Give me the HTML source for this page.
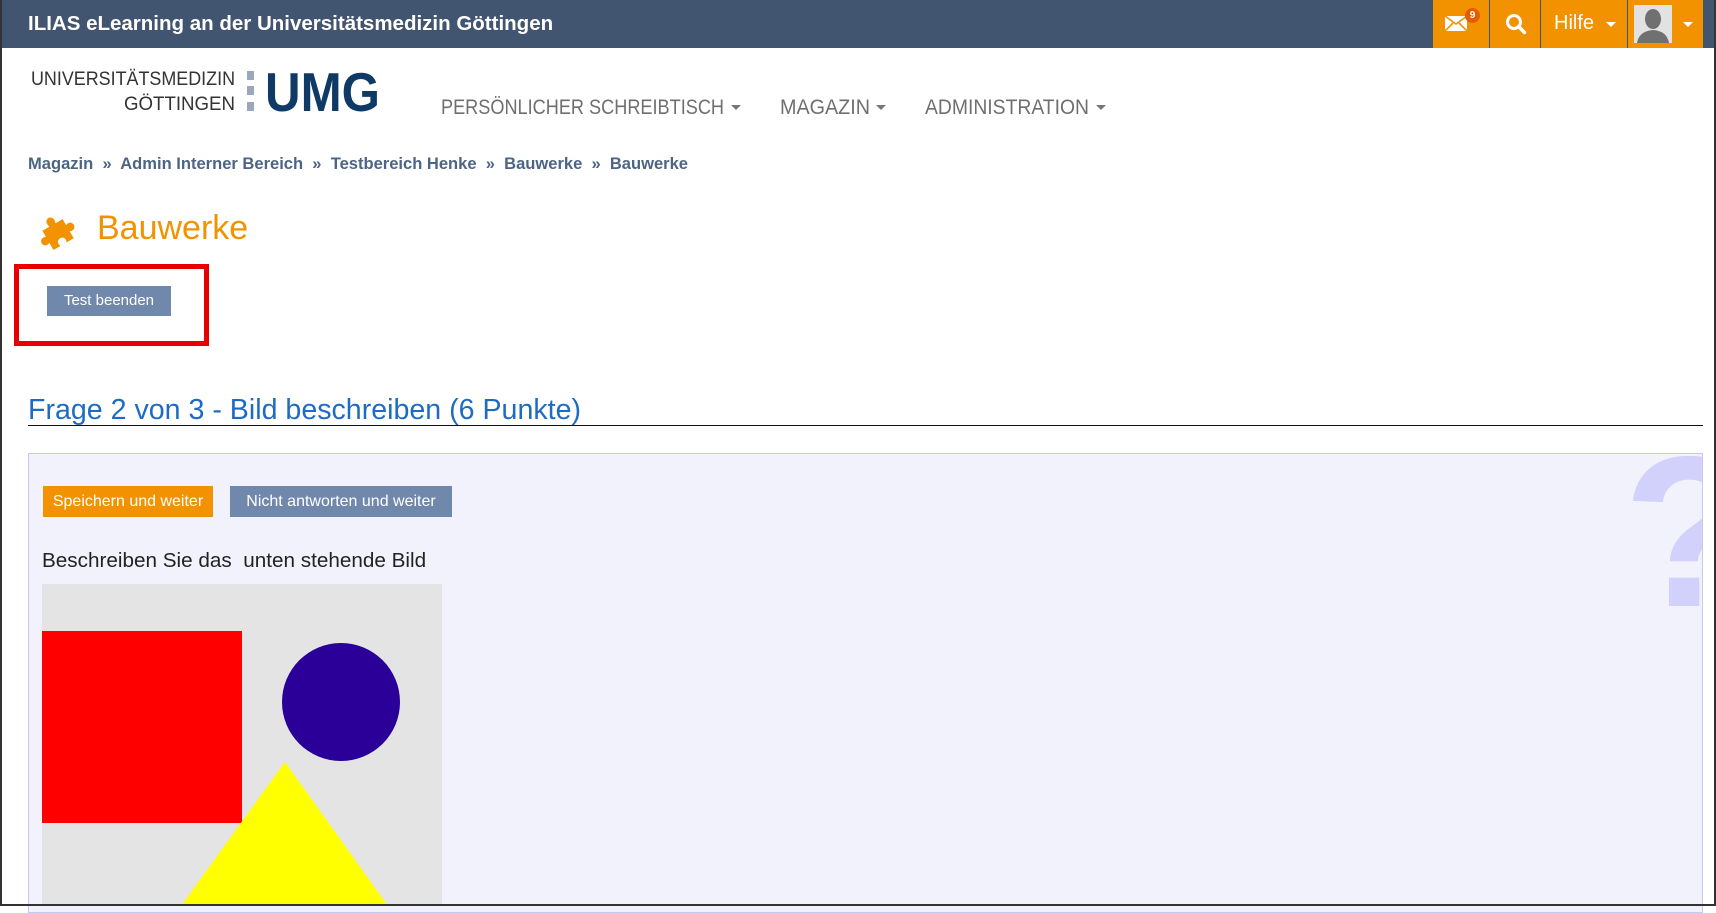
<!DOCTYPE html>
<html><head><meta charset="utf-8"><style>
*{margin:0;padding:0;box-sizing:border-box}
body{width:1716px;height:906px;overflow:hidden;background:#fff;font-family:"Liberation Sans",sans-serif;position:relative}
.a{position:absolute;white-space:nowrap}
#frame{position:absolute;left:0;top:0;width:1716px;height:906px;border:2px solid #333;border-top:none;z-index:10;pointer-events:none}
.car{position:absolute;border-left:5px solid transparent;border-right:5px solid transparent;border-top:5px solid #777}
</style></head><body>
<div id="frame"></div>
<div class="a" style="left:0;top:0;width:1716px;height:48px;background:#415470"></div>
<div class="a" style="left:28px;top:12px;color:#fff;font-size:20.5px;font-weight:bold">ILIAS eLearning an der Universitätsmedizin Göttingen</div>
<div class="a" style="left:1433px;top:0;width:270px;height:48px;background:#f39200"></div>
<div class="a" style="left:1489px;top:0;width:1px;height:48px;background:#415470"></div>
<div class="a" style="left:1540px;top:0;width:1px;height:48px;background:#415470"></div>
<div class="a" style="left:1627px;top:0;width:1px;height:48px;background:#415470"></div>
<svg class="a" style="left:1445px;top:16px" width="22" height="15" viewBox="0 0 22 15"><rect width="22" height="15" fill="#fff"/><path d="M0 0 L11 8 L22 0 M0 15 L8 7 M22 15 L14 7" stroke="#f39200" stroke-width="1.6" fill="none"/></svg>
<div class="a" style="left:1465px;top:8px;width:15px;height:15px;border-radius:50%;background:#e65c00;color:#fff;font-size:10px;font-weight:bold;text-align:center;line-height:15px">9</div>
<svg class="a" style="left:1505px;top:13px" width="22" height="22" viewBox="0 0 22 22"><circle cx="9" cy="9" r="6.5" stroke="#fff" stroke-width="3" fill="none"/><path d="M13.5 13.5 L19.5 19.5" stroke="#fff" stroke-width="3.5" stroke-linecap="round"/></svg>
<div class="a" style="left:1554px;top:12px;color:#fff;font-size:20px">Hilfe</div>
<div class="a" style="left:1606px;top:22px;border-left:5px solid transparent;border-right:5px solid transparent;border-top:5px solid #fff"></div>
<div class="a" style="left:1634px;top:5px;width:38px;height:38px;background:#e2e2e2;overflow:hidden"><svg width="38" height="38" viewBox="0 0 38 38"><ellipse cx="19" cy="14" rx="8" ry="10" fill="#707070"/><path d="M3 38 Q5 26 19 25 Q33 26 35 38Z" fill="#707070"/></svg></div>
<div class="a" style="left:1683px;top:22px;border-left:5px solid transparent;border-right:5px solid transparent;border-top:5px solid #fff"></div>

<svg class="a" style="left:0;top:55px" width="420" height="70">
<text x="31" y="30" font-family="Liberation Sans" font-size="19" fill="#333" textLength="204" lengthAdjust="spacingAndGlyphs">UNIVERSITÄTSMEDIZIN</text>
<text x="124" y="55" font-family="Liberation Sans" font-size="19" fill="#333" textLength="111" lengthAdjust="spacingAndGlyphs">GÖTTINGEN</text>
<rect x="247" y="16" width="7" height="9" fill="#9aa7bd"/>
<rect x="247" y="31" width="7" height="9" fill="#9aa7bd"/>
<rect x="247" y="47" width="7" height="9" fill="#9aa7bd"/>
<text x="265" y="56" font-family="Liberation Sans" font-size="55" font-weight="bold" fill="#0f3a66" textLength="115" lengthAdjust="spacingAndGlyphs">UMG</text>
<g font-family="Liberation Sans" font-size="21" fill="#6f6f6f">
</g></svg>
<svg class="a" style="left:0;top:85px" width="1200" height="40" font-family="Liberation Sans" font-size="21" fill="#6f6f6f">
<text x="441" y="29" textLength="283" lengthAdjust="spacingAndGlyphs">PERSÖNLICHER SCHREIBTISCH</text>
<text x="780" y="29" textLength="90" lengthAdjust="spacingAndGlyphs">MAGAZIN</text>
<text x="925" y="29" textLength="164" lengthAdjust="spacingAndGlyphs">ADMINISTRATION</text>
</svg>
<div class="car" style="left:731px;top:105px"></div>
<div class="car" style="left:876px;top:105px"></div>
<div class="car" style="left:1096px;top:105px"></div>

<svg class="a" style="left:0;top:148px" width="800" height="30"><text x="28" y="21" font-family="Liberation Sans" font-size="17" font-weight="bold" fill="#4d6585" textLength="660" lengthAdjust="spacingAndGlyphs" xml:space="preserve">Magazin  »  Admin Interner Bereich  »  Testbereich Henke  »  Bauwerke  »  Bauwerke</text></svg>

<svg class="a" style="left:34px;top:210px" width="44" height="42" viewBox="0 0 36 36"><path d="M8 12 L15 12 Q13 6 18 5 Q23 6 21 12 L28 12 L28 18 Q33 16 34 21 Q33 26 28 24 L28 31 L21 31 Q23 26 18 25 Q13 26 15 31 L8 31 L8 24 Q3 26 2 21 Q3 16 8 18Z" fill="#f39200" transform="rotate(-30 18 18)"/></svg>
<div class="a" style="left:97px;top:209px;font-size:34px;color:#f39200">Bauwerke</div>

<div class="a" style="left:14px;top:264px;width:195px;height:82px;border:5px solid #e80000"></div>
<div class="a" style="left:47px;top:286px;width:124px;height:30px;background:#7088ab;color:#fff;font-size:15px;text-align:center;line-height:30px">Test beenden</div>

<svg class="a" style="left:0;top:385px" width="700" height="45"><text x="28" y="34" font-family="Liberation Sans" font-size="29" fill="#1e6bc6" textLength="553" lengthAdjust="spacingAndGlyphs">Frage 2 von 3 - Bild beschreiben (6 Punkte)</text></svg>
<div class="a" style="left:28px;top:425px;width:1675px;height:1px;background:#111"></div>

<div class="a" style="left:28px;top:453px;width:1675px;height:460px;background:#f2f2fc;border:1px solid #c8c8f0;overflow:hidden">
<div class="a" style="left:1594px;top:-30px;font-size:215px;font-weight:bold;color:#d1d1fb;line-height:1">?</div>
</div>
<div class="a" style="left:43px;top:486px;width:170px;height:31px;background:#f39200;color:#fff;font-size:16px;text-align:center;line-height:31px">Speichern und weiter</div>
<div class="a" style="left:230px;top:486px;width:222px;height:31px;background:#7088ab;color:#fff;font-size:16px;text-align:center;line-height:31px">Nicht antworten und weiter</div>
<div class="a" style="left:42px;top:549px;font-size:20.7px;color:#222">Beschreiben Sie das&nbsp; unten stehende Bild</div>
<svg class="a" style="left:42px;top:584px" width="400" height="322" viewBox="0 0 400 322"><rect width="400" height="322" fill="#e4e4e4"/><rect x="0" y="47" width="200" height="192" fill="#f00"/><ellipse cx="299" cy="118" rx="59" ry="59" fill="#2a0099"/><polygon points="243,178 346,322 139,322" fill="#ff0"/></svg>
</body></html>
